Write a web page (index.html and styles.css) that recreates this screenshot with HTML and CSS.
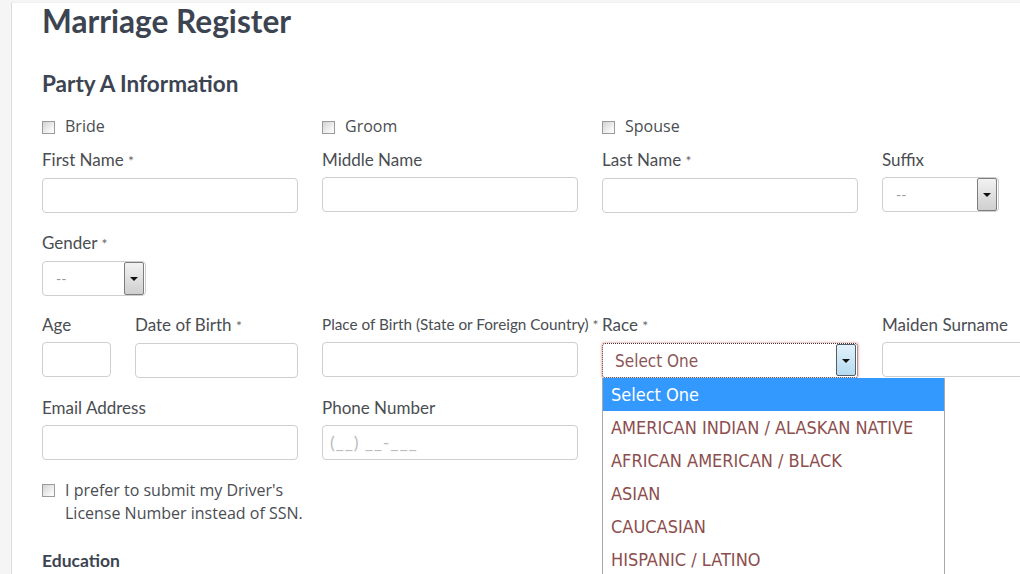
FILE: index.html
```html
<!DOCTYPE html>
<html>
<head>
<meta charset="utf-8">
<title>Marriage Register</title>
<link rel="stylesheet" href="styles.css">
</head>
<body>
<div class="page">
  <div class="panel">
    <h1 class="title">Marriage Register</h1>
    <h2 class="section">Party A Information</h2>

    <div class="row checks">
      <label class="check"><span class="box"></span>Bride</label>
      <label class="check"><span class="box"></span>Groom</label>
      <label class="check"><span class="box"></span>Spouse</label>
      <div></div>
    </div>

    <div class="row">
      <div class="field"><div class="lbl">First Name <span class="req">*</span></div><div class="input"></div></div>
      <div class="field"><div class="lbl">Middle Name</div><div class="input"></div></div>
      <div class="field"><div class="lbl">Last Name <span class="req">*</span></div><div class="input"></div></div>
      <div class="field"><div class="lbl">Suffix</div><div class="select suffix"><span class="val">--</span><span class="arrow"></span></div></div>
    </div>

    <div class="row">
      <div class="field"><div class="lbl">Gender <span class="req">*</span></div><div class="select gender"><span class="val">--</span><span class="arrow"></span></div></div>
    </div>

    <div class="row">
      <div class="pair">
        <div class="field"><div class="lbl">Age</div><div class="input"></div></div>
        <div class="field"><div class="lbl">Date of Birth <span class="req">*</span></div><div class="input"></div></div>
      </div>
      <div class="field"><div class="lbl small">Place of Birth (State or Foreign Country) <span class="req">*</span></div><div class="input"></div></div>
      <div class="field race">
        <div class="lbl">Race <span class="req">*</span></div>
        <div class="select focus"><span class="val red">Select One</span><span class="arrow blue"></span></div>
        <ul class="dropdown">
          <li class="hl">Select One</li>
          <li>AMERICAN INDIAN / ALASKAN NATIVE</li>
          <li>AFRICAN AMERICAN / BLACK</li>
          <li>ASIAN</li>
          <li>CAUCASIAN</li>
          <li>HISPANIC / LATINO</li>
        </ul>
      </div>
      <div class="field"><div class="lbl">Maiden Surname</div><div class="input"></div></div>
    </div>

    <div class="row">
      <div class="field"><div class="lbl">Email Address</div><div class="input"></div></div>
      <div class="field"><div class="lbl">Phone Number</div><div class="input"><span class="ph">(__) __-___</span></div></div>
    </div>

    <label class="check multi"><span class="box"></span><span>I prefer to submit my Driver's<br>License Number instead of SSN.</span></label>

    <h3 class="sub">Education</h3>
  </div>
</div>
</body>
</html>
```

FILE: styles.css
```css
html, body {
  margin: 0;
  padding: 0;
  background: #f5f5f5;
  overflow: hidden;
}
body {
  font-family: Lato, "Open Sans", sans-serif;
  color: #4a4d52;
}
.page {
  padding-left: 11px;
  height: 574px;
  overflow: hidden;
}
.panel {
  background: #fff;
  border-left: 1px solid #dcdcdc;
  border-top: 1px solid #f0f0f0;
  margin-top: 2px;
  padding: 0 0 0 30px;
  height: 600px;
  width: 1300px;
}
.title {
  margin: 0;
  font-size: 31.6px;
  line-height: 36px;
  font-weight: 700;
  color: #3d4451;
}
.section {
  margin: 32px 0 0;
  font-size: 22.5px;
  line-height: 26px;
  font-weight: 700;
  color: #3d4451;
}
.row {
  display: grid;
  grid-template-columns: repeat(4, 256px);
  column-gap: 24px;
}
.checks {
  margin-top: 18px;
  margin-bottom: 12px;
}
.check {
  display: flex;
  align-items: center;
  font-family: "Open Sans", Lato, sans-serif;
  font-size: 16px;
  line-height: 22px;
  color: #4a4d52;
}
.box {
  width: 11px;
  height: 11px;
  border: 1px solid #9b9b9b;
  background: linear-gradient(135deg, #d2d2d2, #f4f4f4 70%, #fff);
  margin-right: 10px;
  margin-top: 2px;
  flex: none;
}
.field {
  margin-bottom: 18.5px;
  position: relative;
}
.lbl {
  font-size: 17px;
  line-height: 21px;
  margin-bottom: 7px;
  white-space: nowrap;
  color: #4a4d52;
}
.lbl.small {
  font-size: 15.3px;
}
.req {
  font-size: 14px;
  color: #666;
}
.input {
  box-sizing: border-box;
  height: 35px;
  border: 1px solid #cfcfcf;
  border-radius: 4px;
  background: #fff;
  display: flex;
  align-items: center;
}
.ph {
  margin-left: 7px;
  font-size: 18px;
  letter-spacing: 0.8px;
  color: #bdbdbd;
}
.pair {
  display: grid;
  grid-template-columns: 69px 163px;
  column-gap: 24px;
}
.select {
  box-sizing: border-box;
  height: 35px;
  border: 1px solid #cfcfcf;
  border-radius: 4px;
  background: #fff;
  display: flex;
  align-items: center;
  position: relative;
}
.select .val {
  margin-left: 13px;
  font-size: 14px;
  color: #9a9a9a;
}
.select .arrow {
  position: absolute;
  right: 1px;
  top: 0;
  bottom: 0;
  width: 18px;
  border: 1px solid #7d7d7d;
  border-radius: 2px;
  background: linear-gradient(#f2f2f2, #cfcfcf);
}
.select .arrow::after {
  content: "";
  position: absolute;
  left: 5px;
  top: 14px;
  border-left: 4px solid transparent;
  border-right: 4px solid transparent;
  border-top: 4px solid #111;
}
.suffix { width: 117px; }
.gender { width: 104px; }
.select.focus {
  border: 1px dotted #4a3232;
  box-shadow: 0 0 2px 1px rgba(230, 140, 140, 0.55);
  border-radius: 3px;
}
.select .val.red {
  margin-left: 12px;
  color: #8c5656;
  font-family: "DejaVu Sans Condensed", "DejaVu Sans", sans-serif;
  font-stretch: condensed;
  font-size: 17px;
}
.select .arrow.blue {
  right: 1px;
  top: 0;
  bottom: 1px;
  border-color: #555d66;
  background: linear-gradient(#e3f2fb, #b5daf1);
}
.dropdown {
  position: absolute;
  left: 0;
  top: 64px;
  width: 343px;
  box-sizing: border-box;
  margin: 0;
  padding: 0;
  list-style: none;
  background: #fff;
  border: 1px solid #a8a8a8;
  border-top: none;
  z-index: 5;
}
.dropdown li {
  height: 33px;
  line-height: 34px;
  padding-left: 8px;
  font-family: "DejaVu Sans Condensed", "DejaVu Sans", sans-serif;
  font-stretch: condensed;
  font-size: 18px;
  color: #8c4e4e;
  white-space: nowrap;
}
.dropdown li.hl {
  background: #3399ff;
  color: #fff;
}
.check.multi {
  align-items: flex-start;
  line-height: 23px;
  margin-top: 1px;
}
.check.multi .box {
  margin-top: 5px;
}
.sub {
  margin: 25px 0 0;
  font-size: 17.5px;
  line-height: 22px;
  font-weight: 700;
  color: #3d4451;
}
```
